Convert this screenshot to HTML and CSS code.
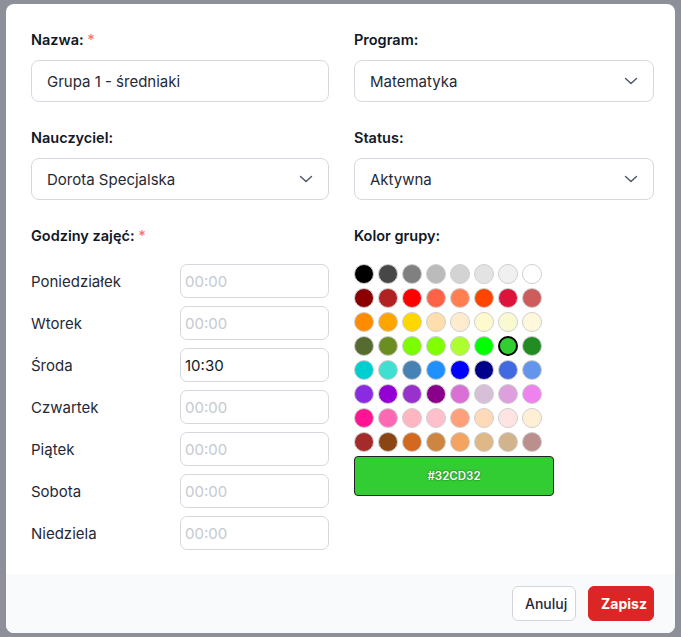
FILE: index.html
```html
<!DOCTYPE html>
<html lang="pl">
<head>
<meta charset="utf-8">
<title>Edytuj grupę</title>
<link rel="stylesheet" href="styles.css">
</head>
<body>
<div class="overlay">
  <div class="modal">
    <div class="modal-body">
      <div class="field">
        <label class="label">Nazwa: <span class="req">*</span></label>
        <input class="input" type="text" value="Grupa 1 - średniaki">
      </div>
      <div class="field">
        <label class="label">Program:</label>
        <div class="select">Matematyka
          <svg class="chev" width="14" height="8" viewBox="0 0 14 8"><path d="M1.5 1.5 L7 6.5 L12.5 1.5" fill="none" stroke="#4b5563" stroke-width="1.4" stroke-linecap="round" stroke-linejoin="round"/></svg>
        </div>
      </div>
      <div class="field">
        <label class="label">Nauczyciel:</label>
        <div class="select">Dorota Specjalska
          <svg class="chev" width="14" height="8" viewBox="0 0 14 8"><path d="M1.5 1.5 L7 6.5 L12.5 1.5" fill="none" stroke="#4b5563" stroke-width="1.4" stroke-linecap="round" stroke-linejoin="round"/></svg>
        </div>
      </div>
      <div class="field">
        <label class="label">Status:</label>
        <div class="select">Aktywna
          <svg class="chev" width="14" height="8" viewBox="0 0 14 8"><path d="M1.5 1.5 L7 6.5 L12.5 1.5" fill="none" stroke="#4b5563" stroke-width="1.4" stroke-linecap="round" stroke-linejoin="round"/></svg>
        </div>
      </div>
      <div class="field">
        <label class="label">Godziny zajęć: <span class="req">*</span></label>
        <div class="days">
          <div class="day"><span>Poniedziałek</span><input class="time" placeholder="00:00"></div>
          <div class="day"><span>Wtorek</span><input class="time" placeholder="00:00"></div>
          <div class="day"><span>Środa</span><input class="time" value="10:30"></div>
          <div class="day"><span>Czwartek</span><input class="time" placeholder="00:00"></div>
          <div class="day"><span>Piątek</span><input class="time" placeholder="00:00"></div>
          <div class="day"><span>Sobota</span><input class="time" placeholder="00:00"></div>
          <div class="day"><span>Niedziela</span><input class="time" placeholder="00:00"></div>
        </div>
      </div>
      <div class="field">
        <label class="label">Kolor grupy:</label>
        <div class="swatches">
          <span style="background:#000000"></span><span style="background:#474747"></span><span style="background:#808080"></span><span style="background:#bbbbbb"></span><span style="background:#d3d3d3"></span><span style="background:#e3e3e3"></span><span style="background:#f0f0f0"></span><span style="background:#ffffff"></span>
          <span style="background:#8b0000"></span><span style="background:#b22222"></span><span style="background:#ff0000"></span><span style="background:#ff6347"></span><span style="background:#ff7f50"></span><span style="background:#ff4500"></span><span style="background:#dc143c"></span><span style="background:#cd5c5c"></span>
          <span style="background:#ff8c00"></span><span style="background:#ffa500"></span><span style="background:#ffd700"></span><span style="background:#ffdead"></span><span style="background:#ffebcd"></span><span style="background:#fffacd"></span><span style="background:#fafad2"></span><span style="background:#fff8dc"></span>
          <span style="background:#556b2f"></span><span style="background:#6b8e23"></span><span style="background:#7cfc00"></span><span style="background:#7fff00"></span><span style="background:#adff2f"></span><span style="background:#00ff00"></span><span class="sel" style="background:#32cd32"></span><span style="background:#228b22"></span>
          <span style="background:#00ced1"></span><span style="background:#40e0d0"></span><span style="background:#4682b4"></span><span style="background:#1e90ff"></span><span style="background:#0000ff"></span><span style="background:#00008b"></span><span style="background:#4169e1"></span><span style="background:#6495ed"></span>
          <span style="background:#8a2be2"></span><span style="background:#9400d3"></span><span style="background:#9932cc"></span><span style="background:#8b008b"></span><span style="background:#da70d6"></span><span style="background:#d8bfd8"></span><span style="background:#dda0dd"></span><span style="background:#ee82ee"></span>
          <span style="background:#ff1493"></span><span style="background:#ff69b4"></span><span style="background:#ffb6c1"></span><span style="background:#ffc0cb"></span><span style="background:#ffa07a"></span><span style="background:#ffdab9"></span><span style="background:#ffe4e1"></span><span style="background:#ffefd5"></span>
          <span style="background:#a52a2a"></span><span style="background:#8b4513"></span><span style="background:#d2691e"></span><span style="background:#cd853f"></span><span style="background:#f4a460"></span><span style="background:#deb887"></span><span style="background:#d2b48c"></span><span style="background:#bc8f8f"></span>
        </div>
        <div class="preview" style="background:#32cd32">#32CD32</div>
      </div>
    </div>
    <div class="modal-foot">
      <button class="btn btn-cancel">Anuluj</button>
      <button class="btn btn-save">Zapisz</button>
    </div>
  </div>
</div>
</body>
</html>
```
FILE: styles.css
```css
html,body{margin:0;padding:0;}
body{background:#8e9099;font-family:Inter,"Noto Sans",sans-serif;color:#111827;}
.overlay{padding:4px 6px 4px 6px;height:637px;box-sizing:border-box;}
.modal{width:669px;height:629px;background:#fff;border-radius:8px;overflow:hidden;display:flex;flex-direction:column;}
.modal-body{flex:1;display:grid;grid-template-columns:298px 300px;column-gap:25px;row-gap:26px;padding:26px 21px 0 25px;align-content:start;}
.label{display:block;font-size:14.5px;font-weight:600;line-height:20px;margin-bottom:10px;color:#111827;}
.req{color:#f87171;font-weight:500;}
.input,.select{box-sizing:border-box;width:100%;height:42px;border:1px solid #d5d8de;border-radius:8px;padding:0 15px;font:15px Inter,"Noto Sans",sans-serif;color:#1f2937;background:#fff;}
.input{outline:none;}
.select{display:flex;align-items:center;justify-content:space-between;padding-right:15px;}
.chev{flex:none;}
.days{display:flex;flex-direction:column;gap:8px;margin-top:18px;}
.day{display:grid;grid-template-columns:149px 149px;align-items:center;font-size:15px;color:#1f2937;}
.time{box-sizing:border-box;height:34px;width:149px;border:1px solid #d5d8de;border-radius:7px;padding:0 4px;font:15px Inter,"Noto Sans",sans-serif;color:#111827;outline:none;}
.time::placeholder{color:#c5c9d0;}
.swatches{display:grid;grid-template-columns:repeat(8,20px);gap:4px;margin-top:18px;}
.swatches span{box-sizing:border-box;width:20px;height:20px;border-radius:50%;border:1px solid #cfcfcf;}
.swatches .sel{border:2px solid #000;}
.preview{box-sizing:border-box;width:200px;height:40px;margin-top:4px;border:1px solid #222;border-radius:4px;display:flex;align-items:center;justify-content:center;color:#fff;font-size:11.5px;font-weight:600;text-shadow:0 0 2px rgba(0,0,0,.6);}
.modal-foot{height:59px;background:#f9fafb;display:flex;justify-content:flex-end;align-items:center;gap:12px;padding-right:21px;}
.btn{height:35px;border-radius:6px;font:14px Inter,"Noto Sans",sans-serif;padding:0 12px;}
.btn-cancel{background:#fff;border:1px solid #d1d5db;color:#1f2937;font-weight:500;width:64px;}
.btn-save{background:#dc2626;border:1px solid #dc2626;color:#fff;font-weight:700;width:66px;}
```
